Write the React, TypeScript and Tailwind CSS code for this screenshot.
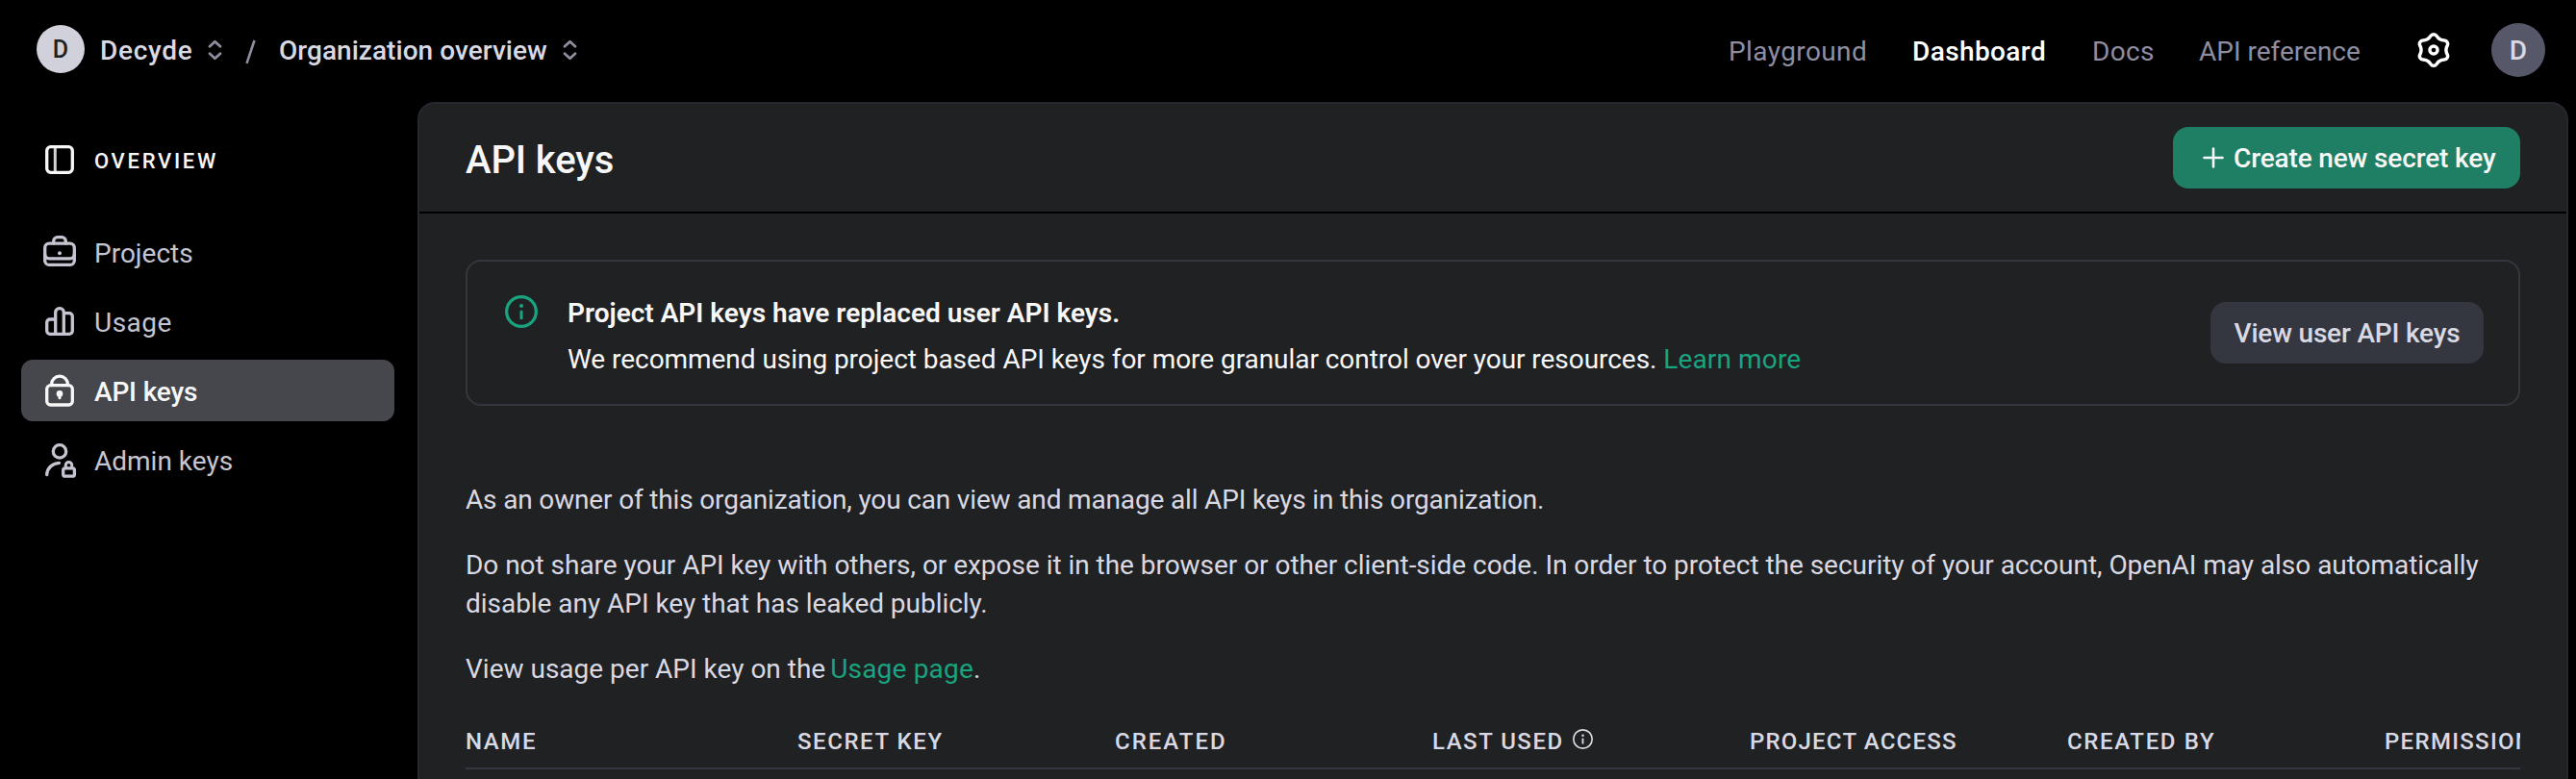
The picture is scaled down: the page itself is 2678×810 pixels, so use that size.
import type { ReactNode } from "react";

function Chevrons() {
  return (
    <svg className="h-[22px] w-[15px]" viewBox="0 0 15 22" fill="none" stroke="#8e8ea0" strokeWidth="2.8" strokeLinecap="round" strokeLinejoin="round">
      <path d="M2 7.3 7.5 2.2 13 7.3M2 14.7l5.5 5.1 5.5-5.1" />
    </svg>
  );
}

function GearIcon() {
  return (
    <svg className="size-[46px]" viewBox="-12 -12 24 24" fill="none" stroke="#fff" strokeWidth="1.8" strokeLinejoin="round">
      <circle r="2.1" />
      <path d="M-1.62-7.61A1.9 1.9 0 0 1 1.62-7.61A5 5 0 0 0 5.78-5.21A1.9 1.9 0 0 1 7.4-2.4A5 5 0 0 0 7.4 2.4A1.9 1.9 0 0 1 5.78 5.21A5 5 0 0 0 1.62 7.61A1.9 1.9 0 0 1-1.62 7.61A5 5 0 0 0-5.78 5.21A1.9 1.9 0 0 1-7.4 2.4A5 5 0 0 0-7.4-2.4A1.9 1.9 0 0 1-5.78-5.21A5 5 0 0 0-1.62-7.61z" />
    </svg>
  );
}

function Icon({ children }: { children: ReactNode }) {
  return (
    <svg className="size-10 shrink-0" viewBox="0 0 40 40" fill="none" stroke="currentColor" strokeWidth="3.3" strokeLinecap="round" strokeLinejoin="round">
      {children}
    </svg>
  );
}

const panelIcon = (
  <Icon>
    <rect x="6.7" y="6.7" width="26.6" height="26.6" rx="4" />
    <path d="M15.3 7v26" strokeWidth="3" strokeOpacity=".85" />
  </Icon>
);

const projectsIcon = (
  <Icon>
    <rect x="4.7" y="11.2" width="30.6" height="22.2" rx="4.5" />
    <path d="M13.7 11V8.7a4 4 0 0 1 4-4h4.6a4 4 0 0 1 4 4V11M4.7 22.5c0 2.8 1.9 4.3 4.6 4.3h21.4c2.7 0 4.6-1.5 4.6-4.3" />
    <circle cx="20" cy="21.3" r="2" fill="currentColor" stroke="none" />
  </Icon>
);

const usageIcon = (
  <Icon>
    <path d="M15.7 33.4H10a3.3 3.3 0 0 1-3.3-3.3v-8.8A3.3 3.3 0 0 1 10 18h5.7M15.7 33.4V10.7a4 4 0 0 1 4-4h.6a4 4 0 0 1 4 4v22.7zM24.3 11.7H30a3.3 3.3 0 0 1 3.3 3.3v15.1a3.3 3.3 0 0 1-3.3 3.3h-5.7" />
  </Icon>
);

const lockIcon = (
  <Icon>
    <rect x="6.7" y="14.7" width="26.6" height="20.3" rx="3.8" />
    <path d="M11.6 14.5v-.9a8.4 8.4 0 0 1 16.8 0v.9" />
    <circle cx="20" cy="23.4" r="3.3" fill="currentColor" stroke="none" />
    <path d="M20 24v3.8" strokeWidth="3" />
  </Icon>
);

const adminIcon = (
  <Icon>
    <circle cx="20" cy="11.4" r="6.7" />
    <path d="M6.7 35.6c.4-7 5.6-11.8 12.8-12.2" />
    <rect x="23.7" y="28.9" width="11.7" height="8.3" rx="2" />
    <path d="M26.3 28.6v-3a3.2 3.2 0 0 1 6.4 0v3" strokeWidth="3" />
  </Icon>
);

function InfoIcon({ className, stroke }: { className: string; stroke: number }) {
  return (
    <svg className={className} viewBox="0 0 34 34" fill="none" stroke="currentColor" strokeWidth={stroke} strokeLinecap="round">
      <circle cx="17" cy="17" r={17 - stroke / 2} />
      <path d="M17 17v6.8" strokeWidth="3" />
      <circle cx="17" cy="10.9" r="2" fill="currentColor" stroke="none" />
    </svg>
  );
}

const items = [
  { label: "Projects", icon: projectsIcon, cls: "" },
  { label: "Usage", icon: usageIcon, cls: "tracking-[0.48px]" },
  { label: "API keys", icon: lockIcon, cls: "tracking-[-0.17px]", active: true },
  { label: "Admin keys", icon: adminIcon, cls: "" },
];

const columns: { label: string; cls: string; info?: boolean }[] = [
  { label: "NAME", cls: "w-[345px] tracking-[1.6px]" },
  { label: "SECRET KEY", cls: "w-[330px] tracking-[1.56px]" },
  { label: "CREATED", cls: "w-[330px] tracking-[2px]" },
  { label: "LAST USED", cls: "w-[330px] tracking-[1.5px]", info: true },
  { label: "PROJECT ACCESS", cls: "w-[330px] tracking-[1.2px]" },
  { label: "CREATED BY", cls: "w-[330px] tracking-[1.65px]" },
  { label: "PERMISSIONS", cls: "w-[330px] tracking-[1.3px]" },
];

function Header() {
  return (
    <header className="flex h-[106px] shrink-0 justify-between pr-8 pl-[38px]">
      <div className="flex items-start pt-[26px] font-medium text-[#d9d9e3]">
        <div className="flex size-[50px] justify-center rounded-full bg-[#d1d1db] pt-[11px] text-[25px] leading-[29px] text-[#202123]">D</div>
        <div className="mt-[10px] ml-4 w-28 text-[28px] leading-[33px] tracking-[0.7px]">Decyde</div>
        <div className="mt-[15px]"><Chevrons /></div>
        <svg className="mt-[14px] ml-[22px] h-7 w-4" viewBox="0 0 16 28" stroke="#8e8ea0" strokeWidth="2.6"><path d="M3.5 25.8 11.5 2" /></svg>
        <div className="mt-[10px] ml-[21px] w-[295px] text-[28px] leading-[33px] tracking-[0.04px]">Organization overview</div>
        <div className="mt-[15px]"><Chevrons /></div>
      </div>
      <nav className="flex items-start pt-[37px] text-[28px] leading-[33px] text-[#8e8ea0]">
        <a className="w-[191px] tracking-[0.4px]">Playground</a>
        <a className="w-[187px] font-medium tracking-[0.4px] text-white">Dashboard</a>
        <a className="w-[111px] tracking-[0.33px]">Docs</a>
        <a className="w-[221px]">API reference</a>
        <div className="-mt-2"><GearIcon /></div>
        <div className="-mt-[13px] ml-[37px] flex size-14 justify-center rounded-full bg-[#565869] pt-[12px] font-medium text-[#d9d9e3]">D</div>
      </nav>
    </header>
  );
}

function Sidebar() {
  return (
    <aside className="flex w-[434px] shrink-0 flex-col pr-6 pl-[22px] text-[28px] leading-[33px] text-[#c5c5d2]">
      <div className="flex h-[124px] pt-10 pl-5 text-[#f7f7f8]">
        <div className="h-10">{panelIcon}</div>
        <span className="mt-[9px] ml-4 text-[22px] leading-[25px] font-medium tracking-[2.7px]">OVERVIEW</span>
      </div>
      <div className="flex flex-col gap-2">
        {items.map((it) => (
          <a key={it.label} className={"flex h-16 rounded-[12px] pt-3 pl-5 " + (it.active ? "bg-[#46474c] font-medium text-[#f7f7f8]" : "")}>
            {it.icon}
            <span className={"mt-[5px] ml-4 " + it.cls}>{it.label}</span>
          </a>
        ))}
      </div>
    </aside>
  );
}

export default function App() {
  return (
    <div className="flex h-[810px] w-[2678px] flex-col overflow-hidden bg-black font-[Roboto,'Liberation_Sans',sans-serif] whitespace-nowrap">
      <Header />
      <div className="flex min-h-0 flex-1">
        <Sidebar />
        <main className="mr-2 flex h-[760px] min-w-0 flex-1 flex-col rounded-t-[18px] border-2 border-[#27282f] bg-[#202123]">
          <div className="flex h-[114px] shrink-0 items-start justify-between border-b-2 border-black px-12">
            <h1 className="mt-[35px] text-[40px] leading-[47px] font-medium tracking-[-0.12px] text-[#f7f7f8]">API keys</h1>
            <button className="mt-6 flex h-16 w-[361px] items-start rounded-2xl bg-[#1f7f64] pt-4 pl-[31px] text-[28px] leading-[33px] font-medium tracking-[-0.14px] text-[#f7f7f8]">
              <svg className="mt-[5px] size-[22px]" viewBox="0 0 22 22" stroke="currentColor" strokeWidth="2.6" strokeLinecap="round"><path d="M11 1.5v19M1.5 11h19" /></svg>
              <span className="ml-[10px]">Create new secret key</span>
            </button>
          </div>
          <section className="mx-12 mt-12 flex h-[152px] shrink-0 items-start rounded-2xl border-2 border-[#353740] text-[28px] leading-[33px] text-[#f7f7f8]">
            <InfoIcon className="mt-[35px] ml-[39px] size-[34px] text-[#1aa37f]" stroke={3.3} />
            <div className="ml-[31px] flex-1 pt-[37px]">
              <div className="font-semibold">Project API keys have replaced user API keys.</div>
              <div className="mt-[15px] tracking-[-0.05px]">
                We recommend using project based API keys for more granular control over your resources.{" "}
                <a className="tracking-[0.13px] text-[#1aa37f]">Learn more</a>
              </div>
            </div>
            <button className="mt-[42px] mr-9 flex h-16 w-[284px] justify-center rounded-2xl bg-[#353740] pt-4 font-medium tracking-[-0.19px] text-[#d9d9e3]">View user API keys</button>
          </section>
          <section className="mx-12 mt-[78px] text-[28px] leading-10 text-[#d9d9e3]">
            <p className="tracking-[-0.16px]">As an owner of this organization, you can view and manage all API keys in this organization.</p>
            <p className="mt-7 tracking-[-0.035px]">
              Do not share your API key with others, or expose it in the browser or other client-side code. In order to protect the security of your account, OpenAI may also automatically
              <br />
              disable any API key that has leaked publicly.
            </p>
            <p className="mt-7">
              View usage per API key on the <a className="-ml-0.5 tracking-[0.2px] text-[#1aa37f]">Usage page</a>.
            </p>
          </section>
          <div className="mx-12 mt-[41px] flex h-[43px] shrink-0 overflow-hidden border-b-2 border-[#353740] text-2xl leading-7 font-medium text-[#d9d9e3]">
            {columns.map((c) => (
              <div key={c.label} className={"flex shrink-0 " + c.cls}>
                {c.label}
                {c.info && <InfoIcon className="mt-[1px] ml-[9px] size-[21px]" stroke={2.7} />}
              </div>
            ))}
          </div>
        </main>
      </div>
    </div>
  );
}
